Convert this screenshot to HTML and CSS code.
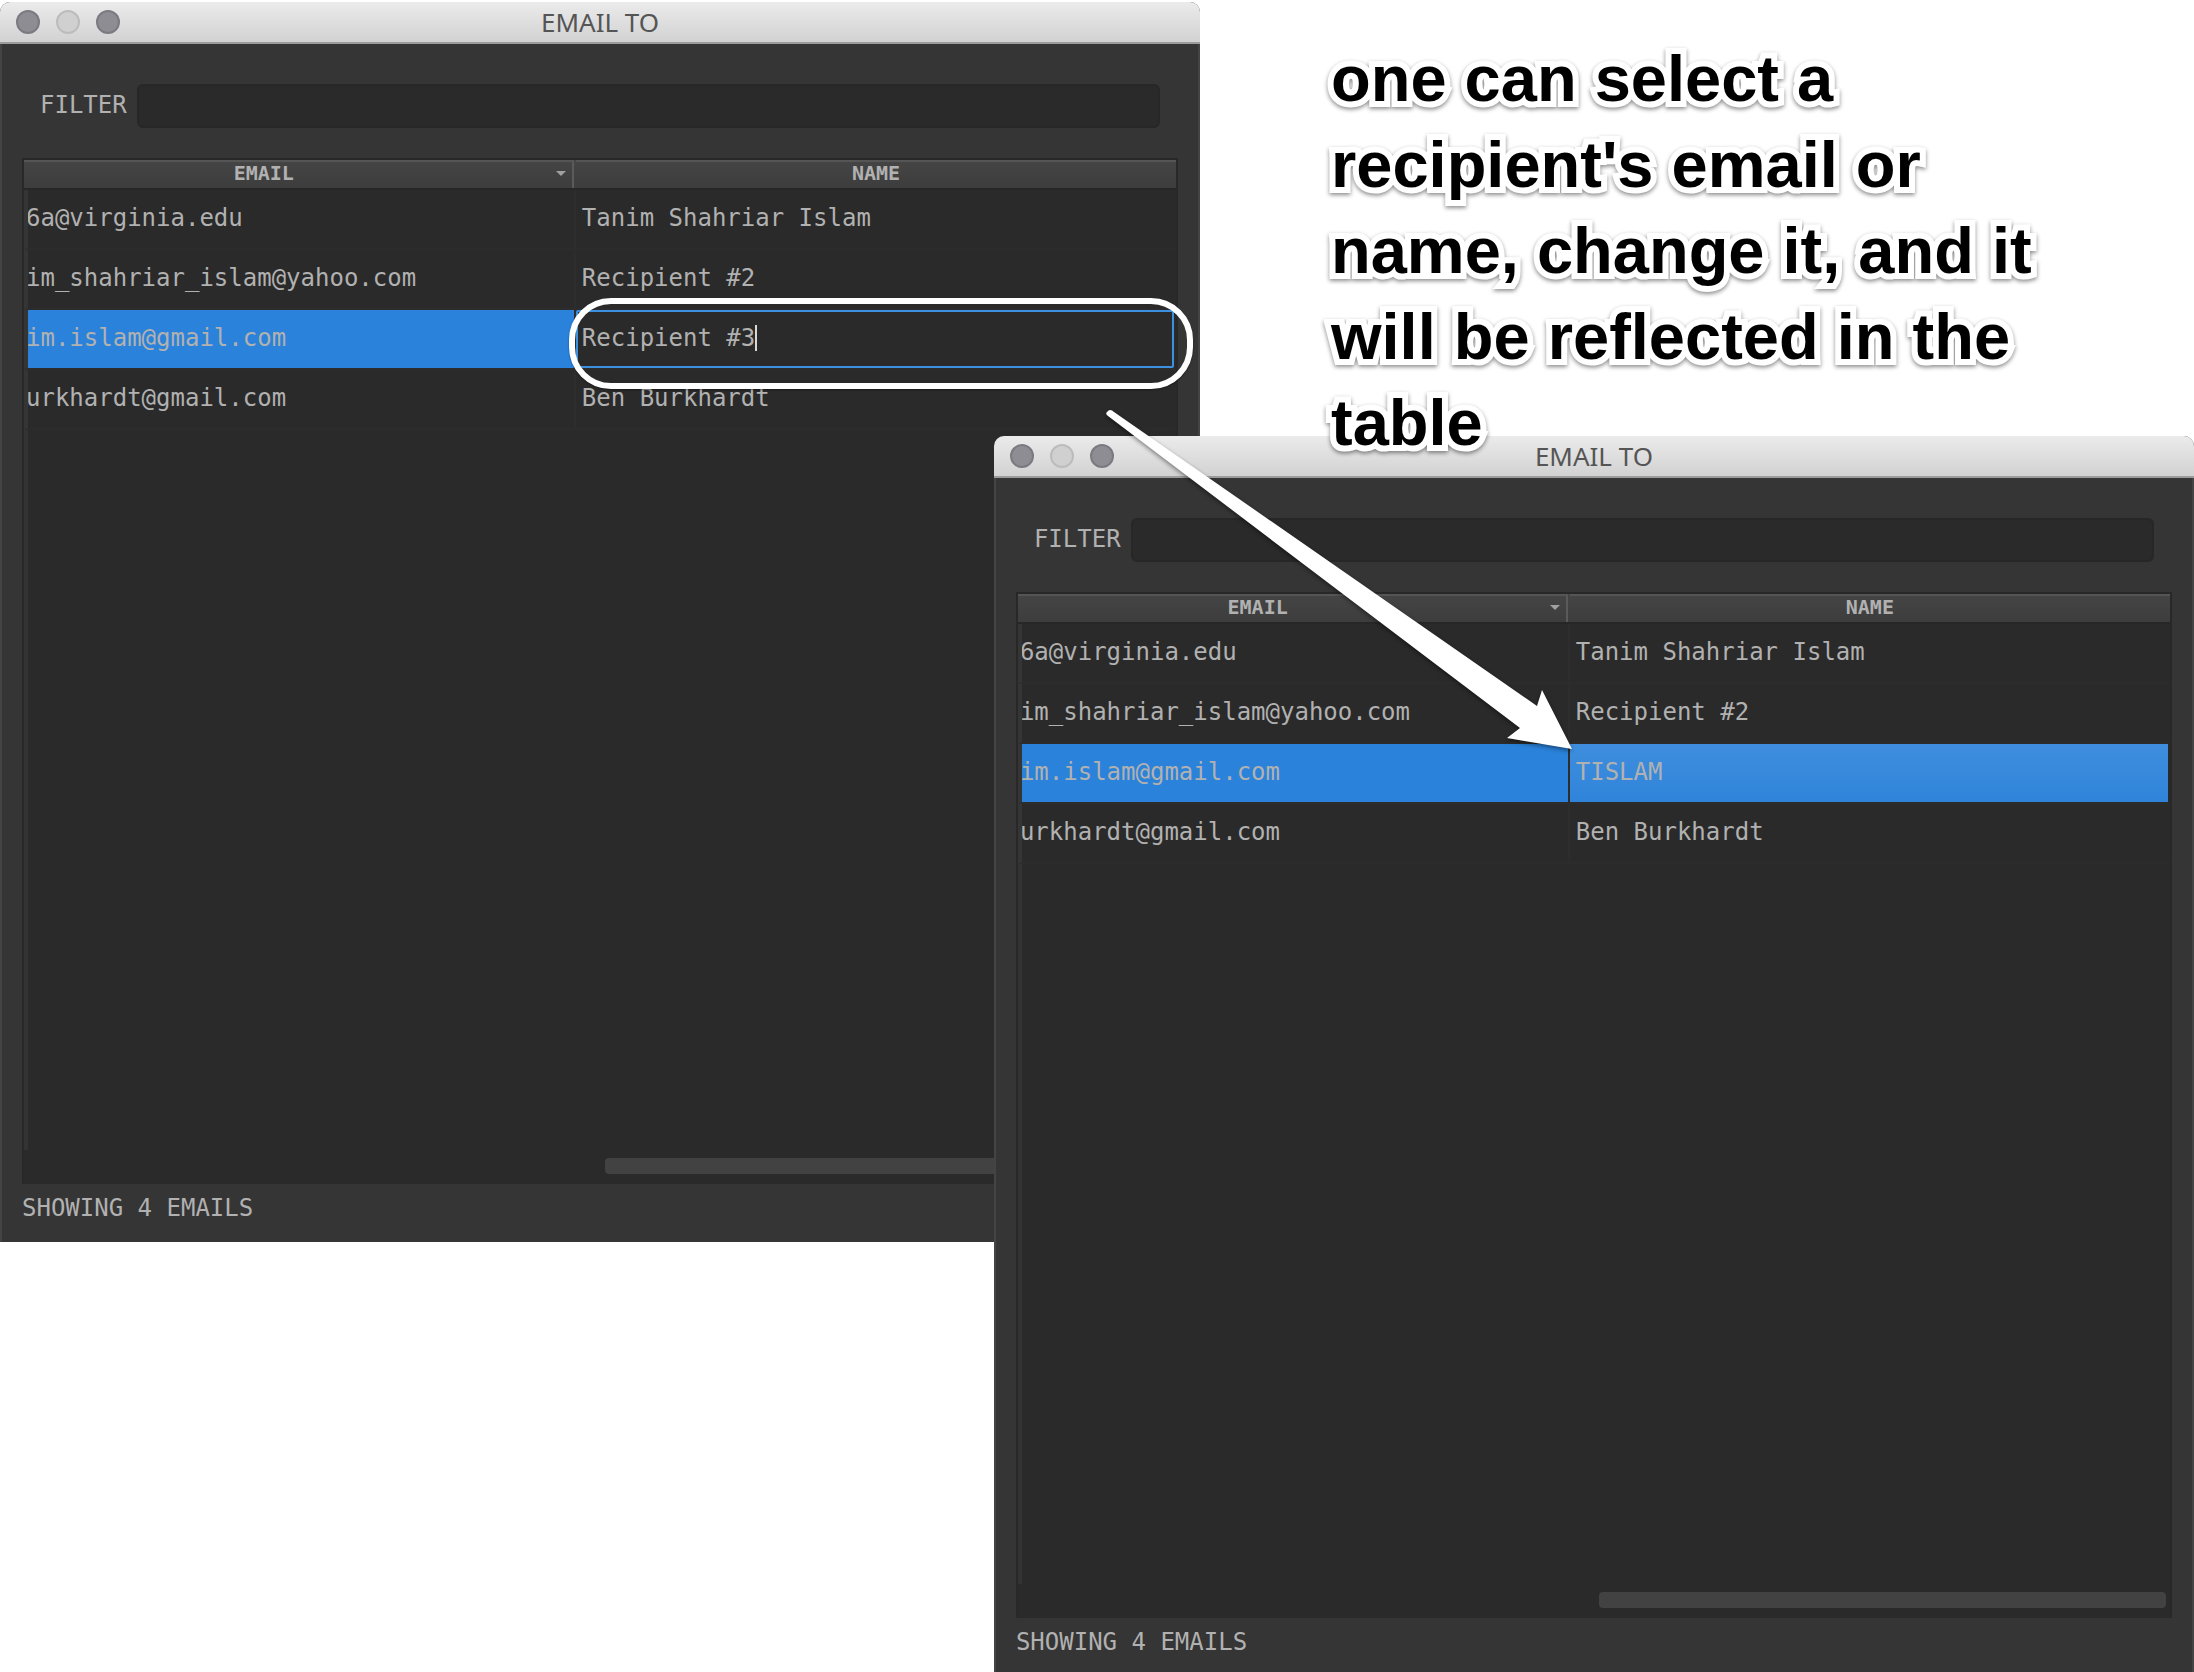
FILE: index.html
```html
<!DOCTYPE html>
<html lang="en">
<head>
<meta charset="utf-8">
<title>EMAIL TO</title>
<link rel="stylesheet" href="styles.css">
</head>
<body>
<main class="stage">
  <section class="window window-before" aria-labelledby="title-before">
    <header class="titlebar">
      <div class="lights">
        <button class="light" type="button" aria-label="Close"></button>
        <button class="light light-off" type="button" aria-label="Minimize"></button>
        <button class="light" type="button" aria-label="Zoom"></button>
      </div>
      <h2 class="title" id="title-before">EMAIL TO</h2>
    </header>
    <div class="content">
      <div class="filter">
        <label for="filter-before">FILTER</label>
        <input class="filter-input" id="filter-before" type="text">
      </div>
      <div class="view">
        <table class="emails">
          <thead>
            <tr>
              <th class="col-email" scope="col"><div class="head head-email"><span>EMAIL</span><svg class="sort" viewBox="0 0 10 5" aria-hidden="true"><path d="M0 0h10L5 5z"/></svg></div></th>
              <th scope="col"><div class="head">NAME</div></th>
            </tr>
          </thead>
          <tbody>
            <tr><td>6a@virginia.edu</td><td>Tanim Shahriar Islam</td></tr>
            <tr><td>im_shahriar_islam@yahoo.com</td><td>Recipient #2</td></tr>
            <tr class="selected"><td>im.islam@gmail.com</td><td class="editing"><div class="editor"><input class="name-input" type="text" value="Recipient #3" aria-label="Name"><span class="caret"></span></div></td></tr>
            <tr><td>urkhardt@gmail.com</td><td>Ben Burkhardt</td></tr>
          </tbody>
        </table>
        <div class="blank"></div>
        <div class="scroll"><div class="thumb"></div></div>
      </div>
      <p class="status">SHOWING 4 EMAILS</p>
    </div>
  </section>

  <section class="window window-after" aria-labelledby="title-after">
    <header class="titlebar">
      <div class="lights">
        <button class="light" type="button" aria-label="Close"></button>
        <button class="light light-off" type="button" aria-label="Minimize"></button>
        <button class="light" type="button" aria-label="Zoom"></button>
      </div>
      <h2 class="title" id="title-after">EMAIL TO</h2>
    </header>
    <div class="content">
      <div class="filter">
        <label for="filter-after">FILTER</label>
        <input class="filter-input" id="filter-after" type="text">
      </div>
      <div class="view">
        <table class="emails">
          <thead>
            <tr>
              <th class="col-email" scope="col"><div class="head head-email"><span>EMAIL</span><svg class="sort" viewBox="0 0 10 5" aria-hidden="true"><path d="M0 0h10L5 5z"/></svg></div></th>
              <th scope="col"><div class="head">NAME</div></th>
            </tr>
          </thead>
          <tbody>
            <tr><td>6a@virginia.edu</td><td>Tanim Shahriar Islam</td></tr>
            <tr><td>im_shahriar_islam@yahoo.com</td><td>Recipient #2</td></tr>
            <tr class="selected"><td>im.islam@gmail.com</td><td>TISLAM</td></tr>
            <tr><td>urkhardt@gmail.com</td><td>Ben Burkhardt</td></tr>
          </tbody>
        </table>
        <div class="blank"></div>
        <div class="scroll"><div class="thumb"></div></div>
      </div>
      <p class="status">SHOWING 4 EMAILS</p>
    </div>
  </section>

  <div class="ring"></div>
  <svg class="arrow" width="480" height="350" viewBox="0 0 480 350" aria-hidden="true">
    <path d="M7 11Q10 7 14 11L437 305L442 289L472 348L407 337L420 327L8 15Q5 13 7 11Z"/>
  </svg>
  <p class="note">one can select a recipient's email or name, change it, and it will be reflected in the table</p>
</main>
</body>
</html>
```
FILE: styles.css
```css
* {
  box-sizing: border-box;
}

body {
  margin: 0;
  background: #fff;
}

.stage {
  position: relative;
  min-height: 100vh;
  overflow: hidden;
  font-family: "DejaVu Sans Mono", "Liberation Mono", monospace;
  font-size: 24px;
  line-height: 32px;
  color: #b1b1b1;
}

/* Windows */
.window {
  position: absolute;
  width: 54.7%;
  border-radius: 10px 10px 0 0;
  overflow: hidden;
  background: #353535;
}

.window-before {
  top: 2px;
  left: 0;
}

.window-after {
  top: 436px;
  right: 0;
}

.titlebar {
  display: grid;
  grid-template-columns: 1fr auto 1fr;
  align-items: center;
  height: 42px;
  padding: 0 16px;
  border-bottom: 2px solid #9c9c9c;
  background: linear-gradient(#ebebeb, #d2d2d2);
}

.lights {
  display: flex;
  gap: 16px;
}

.light {
  width: 24px;
  height: 24px;
  padding: 0;
  border: 2px solid #7b7a80;
  border-radius: 50%;
  background: #8e8d93;
}

.light-off {
  border-color: #bcbcbc;
  background: #d0d0d0;
}

.title {
  margin: 0;
  font: 400 26px/32px "Noto Sans", "Open Sans", sans-serif;
  color: #555;
}

.content {
  padding: 40px 20px 18px;
  border: solid #444;
  border-width: 0 2px;
}

.filter {
  display: flex;
  align-items: center;
  gap: 10px;
  padding: 0 18px;
  margin-bottom: 30px;
}

.filter label {
  padding-bottom: 2px;
}

.filter-input {
  flex: 1;
  min-width: 0;
  height: 44px;
  padding: 0 8px;
  border: 2px solid #272727;
  border-radius: 6px;
  background: #2a2a2a;
  font: inherit;
  color: inherit;
}

/* Recipients table */
.view {
  display: flex;
  flex-direction: column;
  min-height: 1026px;
  border: 2px solid #282828;
  border-bottom: 0;
  background: #2a2a2a;
}

.emails {
  width: 100%;
  table-layout: fixed;
  border-collapse: separate;
  border-spacing: 0;
}

.col-email {
  width: 47.9%;
}

th {
  height: 30px;
  padding: 0;
  border-bottom: 2px solid #272727;
  background: linear-gradient(#454545, #3d3d3d);
  font-size: 20px;
  line-height: 22px;
}

.head {
  height: 28px;
  border-top: 2px solid #555;
}

.head-email {
  display: flex;
  align-items: center;
  justify-content: flex-end;
  gap: 262px;
  padding: 0 6px 4px 0;
  border-right: 2px solid #5a5a5a;
  margin-right: 2px;
}

.sort {
  width: 10px;
  height: 5px;
  fill: #a0a0a0;
}

td {
  height: 60px;
  padding: 0 0 2px 6px;
  border-bottom: 2px solid #2c2c2c;
  background-clip: padding-box;
  white-space: nowrap;
}

td:first-child {
  padding-left: 0;
  border-left: 4px solid #353535;
  border-right: 2px solid #2d2d2d;
  overflow: hidden;
  text-indent: -2px;
}

td:last-child {
  border-right: 2px solid #2a2a2a;
}

.selected td {
  background-color: #2a82da;
}

.selected td:last-child {
  background-image: linear-gradient(#3f8ede, #2f84da);
}

.selected td.editing:last-child {
  padding: 0;
  background: #2a2a2a;
}

.editor {
  display: flex;
  align-items: center;
  height: 58px;
  padding: 0 0 2px 4px;
  border: 2px solid #3d8fe0;
  border-radius: 2px;
}

.name-input {
  width: 12ch;
  padding: 0;
  border: 0;
  outline: 0;
  background: transparent;
  font: inherit;
  color: inherit;
}

.caret {
  width: 2px;
  height: 26px;
  background: #d8d8d8;
}

.blank {
  flex: 1;
  border-left: 4px solid #333;
}

.scroll {
  padding: 8px 4px 10px;
}

.thumb {
  width: 49.6%;
  height: 16px;
  margin-left: auto;
  border-radius: 4px;
  background: #424242;
}

.status {
  margin: 8px 0 0;
}

/* Annotations over the windows */
.ring {
  position: absolute;
  top: 298px;
  left: 569px;
  width: 624px;
  height: 91px;
  border: 6px solid #fff;
  border-radius: 42px;
  box-shadow: 0 1px 2px rgba(0, 0, 0, 0.4);
}

.arrow {
  position: absolute;
  top: 401px;
  left: 1100px;
  overflow: visible;
  fill: #fff;
  filter: drop-shadow(0 2px 2px rgba(0, 0, 0, 0.45));
}

.note {
  position: absolute;
  top: 36px;
  left: 1331px;
  width: 740px;
  margin: 0;
  font: 700 65px/86px "Liberation Sans", Arial, sans-serif;
  color: #000;
  -webkit-text-stroke: 12px #fff;
  paint-order: stroke fill;
  stroke-linejoin: round;
  filter: drop-shadow(0 2px 2px rgba(0, 0, 0, 0.45));
}
```
